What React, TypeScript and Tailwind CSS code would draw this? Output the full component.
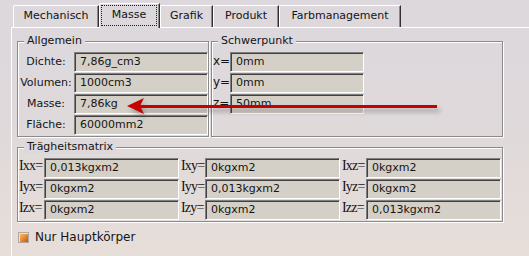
import React from 'react';

const Field = ({ value, w = 'w-[134px]' }: { value: string; w?: string }) => (
    <div
        className={`${w} h-[20px] flex items-center pl-[5px] bg-[#d4d0c8] border border-[#808080] border-b-white border-r-white shadow-[inset_1px_1px_0_#404040] text-[#141414]`}
    >
        {value}
    </div>
);

const Group = ({
    title,
    className,
    children,
}: {
    title: string;
    className: string;
    children: React.ReactNode;
}) => (
    <div
        className={`relative border border-[#8a8a8a] shadow-[inset_1px_1px_0_#ffffff,1px_1px_0_#ffffff] ${className}`}
    >
        <span className="absolute -top-[8px] left-[6px] px-[3px] bg-[#dcd8dc] leading-[14px] text-[#141414]">
            {title}
        </span>
        {children}
    </div>
);

const Tab = ({ label, w, active }: { label: string; w: string; active?: boolean }) =>
    active ? (
        <div
            className={`${w} h-[25px] -mb-px relative z-10 bg-[#dcd8dc] border-l border-t border-white rounded-tl-[2px] border-r border-r-[#303030] shadow-[inset_-1px_0_0_#8a8a8a] p-[1px] pr-[2px] pb-[2px]`}
        >
            <div className="h-full border border-dotted border-[#202020] flex items-center justify-center">
                {label}
            </div>
        </div>
    ) : (
        <div
            className={`${w} h-[22px] flex items-center justify-center border-l border-t border-white rounded-tl-[2px] border-r border-r-[#303030] shadow-[inset_-1px_0_0_#8a8a8a]`}
        >
            {label}
        </div>
    );

const matrix = [
    [
        ['Ixx=', '0,013kgxm2'],
        ['Ixy=', '0kgxm2'],
        ['Ixz=', '0kgxm2'],
    ],
    [
        ['Iyx=', '0kgxm2'],
        ['Iyy=', '0,013kgxm2'],
        ['Iyz=', '0kgxm2'],
    ],
    [
        ['Izx=', '0kgxm2'],
        ['Izy=', '0kgxm2'],
        ['Izz=', '0,013kgxm2'],
    ],
];

export default function App() {
    return (
        <div
            className="relative w-[529px] h-[256px] overflow-hidden flex flex-col bg-linear-to-b from-[#dcd8dd] via-[#dfd9da] to-[#e7ded9] text-[11px] text-[#141414]"
            style={{ fontFamily: '"DejaVu Sans", Verdana, sans-serif' }}
        >
            {/* tabs */}
            <div className="h-[27px] pl-[13px] flex items-end">
                <Tab label="Mechanisch" w="w-[86px]" />
                <Tab label="Masse" w="w-[61px]" active />
                <Tab label="Grafik" w="w-[53px]" />
                <Tab label="Produkt" w="w-[66px]" />
                <Tab label="Farbmanagement" w="w-[122px]" />
            </div>

            {/* panel */}
            <div className="flex-1 ml-[11px] border-l border-t border-white pl-[5px] pt-[13px]">
                <div className="flex gap-[2px]">
                    <Group title="Allgemein" className="w-[192px] h-[96px] pt-[10px] pl-[1px]">
                        <div className="flex flex-col gap-[1px]">
                            {[
                                ['Dichte:', '7,86g_cm3'],
                                ['Volumen:', '1000cm3'],
                                ['Masse:', '7,86kg'],
                                ['Fläche:', '60000mm2'],
                            ].map(([l, v]) => (
                                <div key={l} className="flex items-center gap-[1px]">
                                    <div className="w-[54px] text-center whitespace-nowrap">{l}</div>
                                    <Field value={v} />
                                </div>
                            ))}
                        </div>
                    </Group>
                    <Group title="Schwerpunkt" className="w-[292px] h-[96px] pt-[10px] pl-[1px]">
                        <div className="flex flex-col gap-[1px]">
                            {[
                                ['x=', '0mm'],
                                ['y=', '0mm'],
                                ['z=', '50mm'],
                            ].map(([l, v]) => (
                                <div key={l} className="flex items-center">
                                    <div className="w-[17px] text-[12px] leading-[14px] -mt-[3px]">{l}</div>
                                    <Field value={v} />
                                </div>
                            ))}
                        </div>
                    </Group>
                </div>

                <Group title="Trägheitsmatrix" className="mt-[10px] w-[486px] h-[75px] pt-[10px] pl-[1px]">
                    <div className="flex flex-col gap-[1px]">
                        {matrix.map((row, i) => (
                            <div key={i} className="flex gap-[2px]">
                                {row.map(([l, v], j) => (
                                    <div key={l} className="flex items-start">
                                        <div
                                            className={`${j === 0 ? 'w-[25px]' : 'w-[24px]'} text-[14px] leading-[16px] tracking-[-0.8px] whitespace-nowrap`}
                                            style={{ fontFamily: '"Liberation Serif", "Times New Roman", serif' }}
                                        >
                                            {l}
                                        </div>
                                        <Field value={v} w="w-[135px]" />
                                    </div>
                                ))}
                            </div>
                        ))}
                    </div>
                </Group>

                <div className="mt-[6px] flex items-center gap-[6px] pl-[1px]">
                    <div className="w-[11px] h-[11px] border border-[#b0a8a0] bg-linear-to-br from-[#f8c880] via-[#e8903a] to-[#b85a18] shadow-[inset_1px_1px_0_#fde0b0]" />
                    <span className="text-[12px]">Nur Hauptkörper</span>
                </div>
            </div>

            {/* annotation arrow */}
            <svg className="absolute left-0 top-0 pointer-events-none" width="529" height="256">
                <defs>
                    <filter id="blur" x="-10%" y="-100%" width="120%" height="300%">
                        <feGaussianBlur stdDeviation="2" />
                    </filter>
                </defs>
                <g transform="translate(3 4)" fill="rgba(60,50,50,0.35)" filter="url(#blur)">
                    <rect x="138" y="105" width="299" height="3" />
                    <polygon points="127,106 143,98 139,106 143,114" />
                </g>
                <rect x="137" y="105" width="300" height="3" fill="#c40000" />
                <polygon points="127,106 144,98 140,106 144,114" fill="#c40000" />
            </svg>
        </div>
    );
}
